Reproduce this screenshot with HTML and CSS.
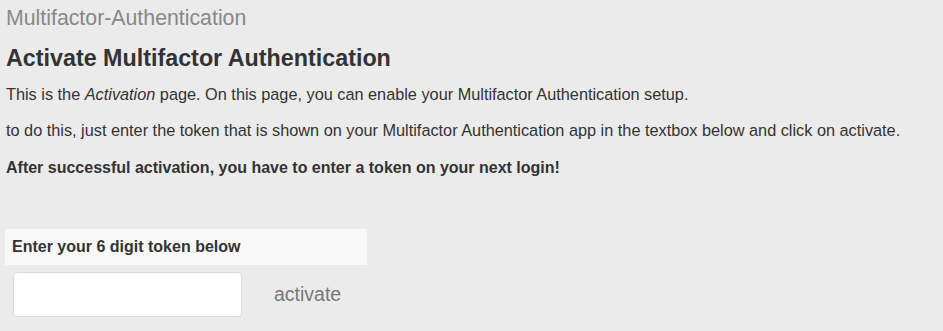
FILE: index.html
```html
<!DOCTYPE html>
<html lang="en">

<head>
  <meta charset="UTF-8">
  <meta name="viewport" content="width=device-width, initial-scale=1.0">
  <title>Multifactor-Authentication</title>
  <link rel="stylesheet" href="styles.css">
</head>

<body>
  <div class="page">
    <div class="crumb">Multifactor-Authentication</div>
    <h1>Activate Multifactor Authentication</h1>
    <p>This is the <em>Activation</em> page. On this page, you can enable your Multifactor Authentication setup.</p>
    <p>to do this, just enter the token that is shown on your Multifactor Authentication app in the textbox below and click on activate.</p>
    <p class="strong">After successful activation, you have to enter a token on your next login!</p>

    <form class="token-form">
      <div class="token-label">Enter your 6 digit token below</div>
      <div class="token-row">
        <input type="text" class="token-input">
        <button type="button" class="activate">activate</button>
      </div>
    </form>
  </div>
</body>

</html>
```

FILE: styles.css
```css
html, body {
  margin: 0;
  background-color: #ebebeb;
}
body {
  font-family: "Liberation Sans", Arial, sans-serif;
  color: #333;
  font-size: 16px;
}
.page {
  padding: 6px 6px 0 6px;
}
.crumb {
  color: #888;
  font-size: 21.3px;
  line-height: 24px;
}
h1 {
  font-size: 23.3px;
  font-weight: bold;
  line-height: 28px;
  margin: 14px 0 12px 0;
}
p {
  margin: 0 0 16px 0;
  line-height: 20px;
  font-size: 16.3px;
}
.strong {
  font-weight: bold;
  font-size: 16px;
  margin-top: 18px;
}
.token-form {
  margin-top: 51px;
}
.token-label {
  width: 355px;
  background-color: #f8f8f8;
  font-weight: bold;
  line-height: 36px;
  padding-left: 7px;
  margin-left: -1px;
}
.token-row {
  display: flex;
  align-items: center;
  padding: 7px 0 0 7px;
}
.token-input {
  width: 229px;
  height: 45px;
  box-sizing: border-box;
  border: 1px solid #d6dbe6;
  border-radius: 4px;
  background: #fff;
  margin: 0;
}
.activate {
  background: none;
  border: none;
  color: #777;
  font-family: inherit;
  font-size: 19.5px;
  margin-left: 26px;
  padding: 0 6px;
}
```
